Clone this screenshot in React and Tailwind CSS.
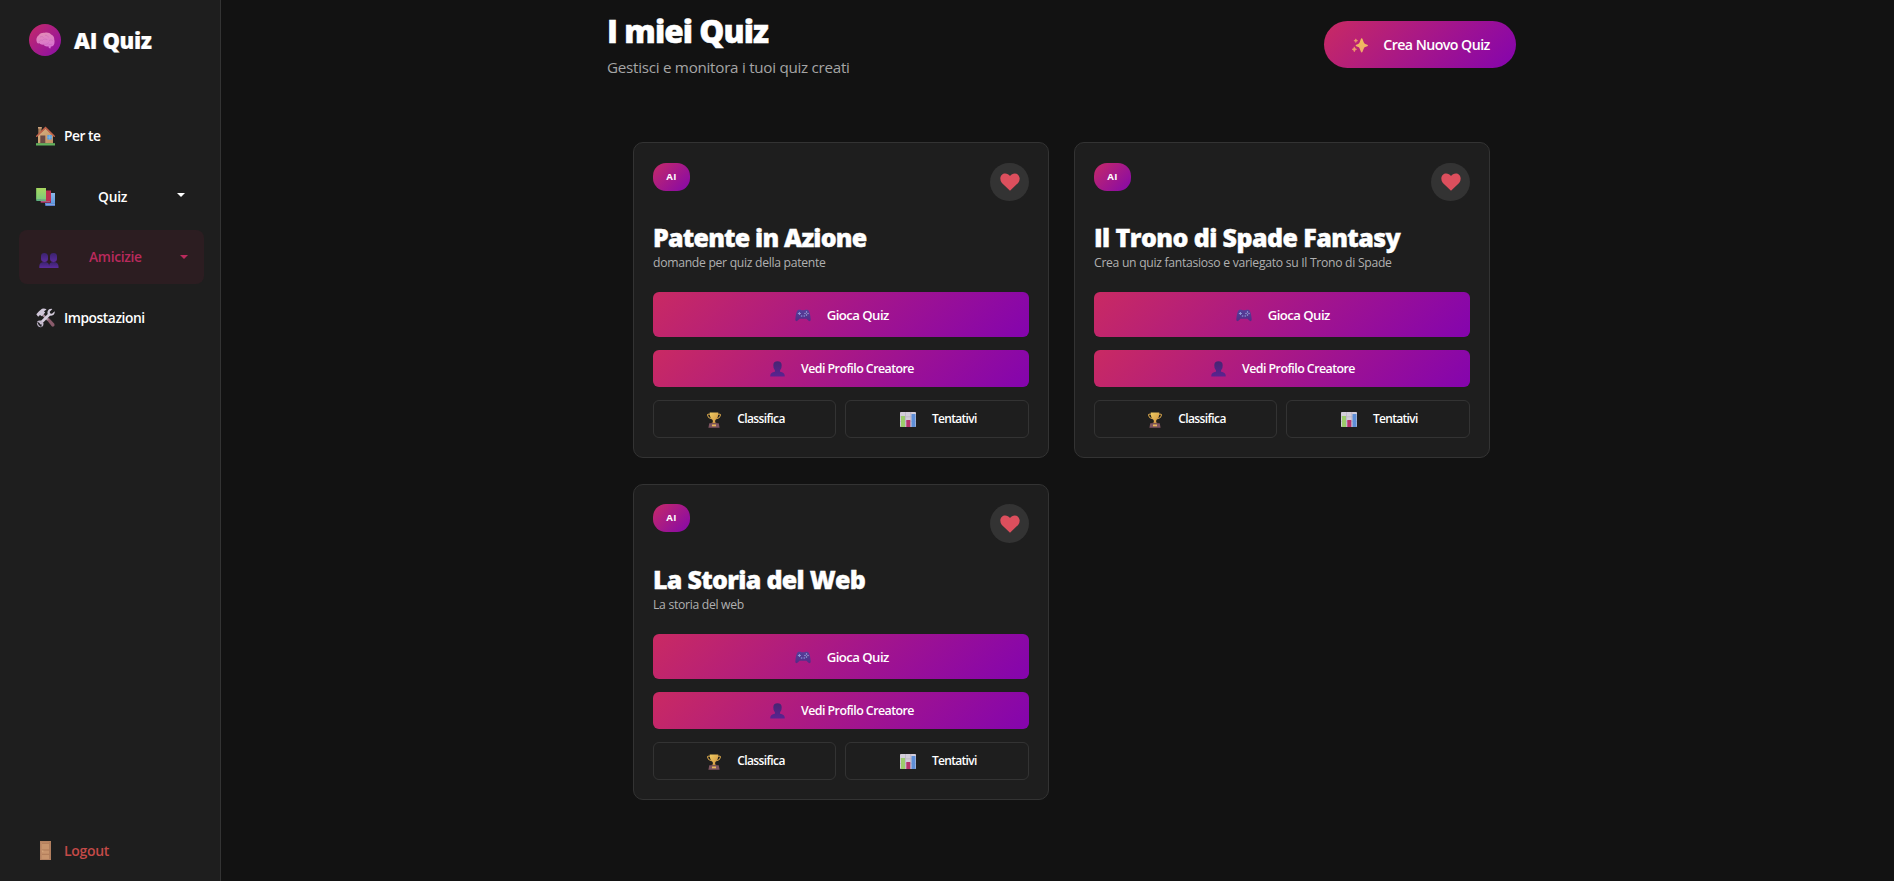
const BrainIcon = () => (
  <svg width="19" height="17" viewBox="0 0 19 17">
    <defs>
      <linearGradient id="brain" x1="0" y1="0" x2="0.3" y2="1">
        <stop offset="0" stopColor="#e48fb4" />
        <stop offset="1" stopColor="#d873d0" />
      </linearGradient>
    </defs>
    <path d="M1 10.500C-.3 7.800.6 4.600 2.800 3.200 4.200 1 6.800.4 8.800.8c2.400-.8 5.200.1 6.300 1.700 2.100.7 3.300 2.700 3.100 4.800.6 2.100.4 4.300-.6 6-.9 1-1.800 1.300-2.700 1.200l-.5 2-1.500-.4-.5-1.900c-2 .6-4.300 0-5-1.600-1.700.2-3.400-.3-3.900-1.300-1.200.3-2.100-.1-2.500-.8Z" fill="url(#brain)" />
    <path d="M3 9.800c.6-1.600 2-2 3.500-1.500 1-1.400 3-1.700 4.500-.8M4.200 5c1-.7 2.400-.6 3.100.2M9.500 3.300c1.400-.2 2.400.6 2.700 1.700M13.500 8.300c1.300-.6 2.600-.3 3.400.6M8 12.300c1.700.5 3.400-.2 4.500-1.400M13 12.600l3-.3" stroke="#c465b4" strokeWidth=".5" fill="none" strokeLinecap="round" />
  </svg>
);

const HouseIcon = () => (
  <svg width="19" height="20" viewBox="0 0 19 20">
    <defs>
      <linearGradient id="house" x1="0" y1="0" x2="1" y2="1">
        <stop offset="0" stopColor="#d9b382" />
        <stop offset="1" stopColor="#c08e63" />
      </linearGradient>
    </defs>
    <rect x="2.300" y="1.500" width="3.200" height="7" fill="#a77a55" />
    <rect x="2" y="1" width="3.800" height="1.500" fill="#c9a27c" />
    <path d="M2 9.500 9.500 2.200 17 9.500V17.500H2Z" fill="url(#house)" />
    <path d="M.7 10.200 9.500 1.600 18.300 10.200" stroke="#c0614a" strokeWidth="1.500" fill="none" strokeLinecap="round" />
    <rect x="4.300" y="9.500" width="5" height="8" fill="#6b4a45" />
    <rect x="11.300" y="9" width="4.600" height="4.500" fill="#5b9fdc" />
    <path d="M11.300 11.200h4.600M13.600 9v4.500" stroke="#86bdf0" strokeWidth=".6" />
    <rect x="0" y="17.200" width="19" height="2.300" fill="#63b35e" />
  </svg>
);

const BooksIcon = () => (
  <svg width="19" height="18" viewBox="0 0 19 18">
    <defs>
      <linearGradient id="bookGreen" x1="0" y1="0" x2="0" y2="1">
        <stop offset="0" stopColor="#a8d65e" />
        <stop offset="1" stopColor="#7ecb7c" />
      </linearGradient>
      <linearGradient id="bookBlue" x1="0" y1="0" x2="0" y2="1">
        <stop offset="0" stopColor="#8bb8ea" />
        <stop offset="1" stopColor="#5f97dc" />
      </linearGradient>
    </defs>
    <path d="M9 5h10v11H9Z" fill="url(#bookBlue)" />
    <path d="M9 15.700h10V18H10q-1 0-1-1Z" fill="#5277c8" />
    <path d="M10 16.400h9v.7h-9Z" fill="#a9c3ea" />
    <path d="M5 2.500h10v11H5Z" fill="#bf3051" />
    <path d="M4.500 13h10.500v2H5.200q-.7-.2-.7-1Z" fill="#8d2e57" />
    <path d="M5 13.500h9v.5H5Z" fill="#c48aa4" />
    <path d="M0 0h10v11.500H0Z" fill="url(#bookGreen)" />
    <path d="M0 11.200h10V13H1q-1 0-1-1Z" fill="#4fa574" />
    <path d="M1 11.700h9v.5H1Z" fill="#a5d9ab" />
    <path d="M.4 0v11.500" stroke="#6fae55" strokeWidth=".8" />
  </svg>
);

const FriendsIcon = () => (
  <svg width="20" height="15" viewBox="0 0 20 15">
    <defs>
      <linearGradient id="friends" x1="0" y1="0" x2="0" y2="1">
        <stop offset="0" stopColor="#3b236f" />
        <stop offset="1" stopColor="#5b2b9b" />
      </linearGradient>
    </defs>
    <g fill="url(#friends)">
      <path d="M2 3.300Q2 0 5.300 0T9 3.300V6Q8.800 9 5.500 9T2 6Z" />
      <path d="M11 3.300Q11 0 14.500 0T18 3.300V6Q17.800 9 14.500 9T11 6Z" />
      <path d="M.3 15v-2Q.5 9 5.400 9T10 13v2Z" />
      <path d="M10 15v-2Q10.300 9 14.600 9T19.500 13v2Z" />
    </g>
  </svg>
);

const ToolsIcon = () => (
  <svg width="20" height="20" viewBox="0 0 20 20">
    <path d="m10.500 11.500 2-2 5.800 6.200q.8 1.600-.4 2.600-1.200.8-2.400-.2Z" fill="#8a5b6b" />
    <path d="M5.500 5.500 12 12" stroke="#a48a9a" strokeWidth="2.400" />
    <path d="M.3 6.300 3 3.300 6 .8q2.600-.7 4.600.8L8 3.300l1.200 1.300L5.700 8.300 4 7 2.200 8.800Z" fill="#cfc6d8" />
    <path d="M4 15.700 14.200 5.500" stroke="#d4ccdc" strokeWidth="2.700" />
    <path d="M18.700 3.200 16 5.700 14 5.500 13.700 3.700 16.400 1Q13 .3 11.700 2.900q-.8 2 .3 3.700 1.700 1.500 4 1 3-1 2.700-4.400Z" fill="#d4ccdc" />
    <path d="M1 13.800q1.400-1.700 3.600-1.300 2.600.7 3 3.200.1 2.500-2.300 3.500l.4-2.700-1.800-1.500Z" fill="#c3b8cc" />
    <path d="M1 13.800Q.3 16.600 2 18.200q1.500 1.300 3.300 1L2.800 17Z" fill="#b5aabf" />
  </svg>
);

const DoorIcon = () => (
  <svg width="11" height="19" viewBox="0 0 11 19">
    <rect width="11" height="19" fill="#b68362" />
    <rect x="1.500" y="1.500" width="8" height="16.500" fill="#c8946d" />
    <path d="M2 2.300h7M2 9h7M2 13.300h7" stroke="#a87353" strokeWidth=".8" />
    <path d="M9.800 1v17" stroke="#9c6b4f" strokeWidth=".6" />
    <circle cx="2.800" cy="10" r=".6" fill="#e5bf90" />
  </svg>
);

const SparklesIcon = () => (
  <svg width="16" height="15" viewBox="0 0 16 15">
    <defs>
      <linearGradient id="spark" x1="0" y1="0" x2="0" y2="1">
        <stop offset="0" stopColor="#f0c257" />
        <stop offset="1" stopColor="#efa66e" />
      </linearGradient>
    </defs>
    <path d="M9.700.3q.6 0 .8.800l1.200 3.200q.4 1.200 1.500 1.600l2.100.8q.6.300.6.800t-.6.8l-2.100.8q-1.100.4-1.500 1.600l-1.200 3.100q-.2.800-.8.800t-.8-.8l-1.200-3.100Q7.300 9.500 6.200 9.100L4.300 8.300q-.6-.3-.6-.8t.6-.8l1.900-.8Q7.300 5.500 7.700 4.300l1.200-3.200q.2-.8.800-.8Z" fill="url(#spark)" />
    <path d="m3.800.8.6 1.300 1.300.6-1.300.6-.6 1.300-.6-1.300-1.300-.6 1.300-.6ZM2.300 8.800l.8 1.700 1.600.8-1.600.8-.8 1.800-.8-1.800-1.500-.8 1.500-.8Z" fill="#ef9a6c" stroke="#ef9a6c" strokeWidth=".5" />
  </svg>
);

const HeartIcon = () => (
  <svg width="20" height="18" viewBox="0 0 20 18" fill="#dc4f5d">
    <path d="M10 17.800 1.900 10Q.3 8.300.3 5.600C.4 2.500 2.600.5 5.200.5 7.100.5 8.900 1.400 10 3c1.100-1.600 2.900-2.500 4.800-2.500 2.600 0 4.800 2 4.900 5.100q0 2.700-1.600 4.400Z" />
  </svg>
);

const GamepadIcon = () => (
  <svg width="16" height="13" viewBox="0 0 16 13">
    <defs>
      <linearGradient id="pad" x1="0" y1="0" x2="0" y2="1">
        <stop offset="0" stopColor="#54409a" />
        <stop offset="1" stopColor="#542a86" />
      </linearGradient>
    </defs>
    <path d="M3.500.8h2.200l.8.500h3l.8-.5h2.200q1.500.4 2.200 3.200.9 3.500 1 6.500 0 1.700-1.200 1.700-.9 0-1.800-1.100L11.500 9.800h-7L3.300 11.100Q2.400 12.200 1.500 12.200.3 12.200.3 10.500q.1-3 1-6.500Q2 1.200 3.500.8Z" fill="url(#pad)" />
    <path d="M4.400 3v3M2.900 4.500h3" stroke="#8f9ad8" strokeWidth="1" />
    <circle cx="11.500" cy="3" r=".7" fill="#9fb2ea" />
    <circle cx="13" cy="4.500" r=".7" fill="#b59ad0" />
    <circle cx="11.500" cy="6" r=".7" fill="#8fb6d8" />
    <circle cx="10" cy="4.500" r=".7" fill="#a7a2e0" />
    <circle cx="6.600" cy="7" r=".9" fill="#7674c0" />
    <circle cx="9.300" cy="7" r=".9" fill="#7674c0" />
  </svg>
);

const PersonIcon = () => (
  <svg width="15" height="16" viewBox="0 0 15 16">
    <defs>
      <linearGradient id="person" x1="0" y1="0" x2="0" y2="1">
        <stop offset="0" stopColor="#452672" />
        <stop offset="1" stopColor="#5a2391" />
      </linearGradient>
    </defs>
    <path d="M3.300 4.200Q3.300.3 7.500.3t4.200 3.900q.2 3.600-1.700 5.200l.1 1.300q4.300.8 4.600 3.600V15.500H.3V14.300q.3-2.800 4.600-3.600L5 9.400Q3.100 7.800 3.300 4.200Z" fill="url(#person)" />
  </svg>
);

const TrophyIcon = () => (
  <svg width="14" height="16" viewBox="0 0 14 16">
    <defs>
      <linearGradient id="cup" x1="0" y1="0" x2="1" y2="1">
        <stop offset="0" stopColor="#f0cc62" />
        <stop offset="1" stopColor="#cf9240" />
      </linearGradient>
    </defs>
    <path d="M3 2.200H1Q.4 2.200.5 3 .8 6.300 4.300 6.700M11 2.200h2q.6 0 .5.8-.3 3.300-3.800 3.700" stroke="#dca94c" strokeWidth="1" fill="none" />
    <path d="M2.700.4h8.600Q11.400 6.500 8.300 8L8 11H6L5.700 8Q2.600 6.500 2.700.4Z" fill="url(#cup)" />
    <path d="M5 10.500h4l.5 1h-5Z" fill="#c58b41" />
    <path d="M2.300 11.300h9.400l.9 4.400H1.400Z" fill="#7e5561" />
    <rect x="5" y="12.500" width="4" height="1.800" fill="#e6b75a" />
  </svg>
);

const ChartIcon = () => (
  <svg width="16" height="15" viewBox="0 0 16 15">
    <rect width="16" height="15" rx=".8" fill="#d3cdda" />
    <path d="M0 4.800h16M0 9.500h16M5.500 0v15M10.700 0v15" stroke="#b5adc2" strokeWidth=".6" />
    <rect x="1" y="4" width="4" height="11" fill="#9ccc6c" />
    <rect x="6.300" y="8" width="4" height="7" fill="#b6336c" />
    <rect x="11.500" y="2" width="4" height="13" fill="#5f8fd8" />
  </svg>
);

const Caret = () => (
  <svg width="8" height="4" viewBox="0 0 8 4" fill="currentColor">
    <path d="M0 0h8L4 4Z" />
  </svg>
);

function Sidebar() {
  return (
    <aside className="flex h-full w-[221px] shrink-0 flex-col border-r border-[#333333] bg-[#1e1e1e]">
      <div className="mt-6 flex h-8 items-center pl-[29px]">
        <div className="flex size-8 items-center justify-center rounded-full bg-linear-135/srgb from-[#c62a68] to-[#8a10a8]">
          <BrainIcon />
        </div>
        <span className="mb-px ml-[13px] text-[22px] leading-8 font-extrabold tracking-[-0.32px] [-webkit-text-stroke:0.2px]">AI Quiz</span>
      </div>

      <nav className="mt-[53px] flex flex-col gap-[6px] pr-4 pl-[19px] text-[13.8px] font-[650]">
        <a className="flex h-[54.500px] items-center pl-[17px]">
          <HouseIcon />
          <span className="mt-px ml-[9px] tracking-[-0.5px]">Per te</span>
        </a>
        <a className="flex h-[54.500px] items-center pl-[17px]">
          <BooksIcon />
          <span className="mt-[2px] ml-[43px] tracking-[-0.2px]">Quiz</span>
          <span className="mr-[19px] mb-[3px] ml-auto"><Caret /></span>
        </a>
        <a className="flex h-[54px] items-center rounded-lg bg-[#2c1d21] pl-5 text-[#b92a5c]">
          <span className="mt-[7px]"><FriendsIcon /></span>
          <span className="mt-px ml-[30px] tracking-[-0.33px]">Amicizie</span>
          <span className="mr-4 mb-px ml-auto"><Caret /></span>
        </a>
        <a className="mt-[0.500px] flex h-[54.500px] items-center pl-[17px]">
          <ToolsIcon />
          <span className="mt-[2px] ml-[8px] tracking-[-0.45px]">Impostazioni</span>
        </a>
      </nav>

      <a className="mt-auto mb-[5px] flex h-[51px] items-center pl-10 text-[14px] font-semibold text-[#c44a48]">
        <DoorIcon />
        <span className="mb-px ml-[13px] tracking-[-0.3px]">Logout</span>
      </a>
    </aside>
  );
}

function QuizCard({ title, titleClass, text, rowClass }) {
  return (
    <article className={`rounded-[10px] border border-[#333333] bg-[#1e1e1e] px-[19px] pb-[19px] ${rowClass}`}>
      <div className="flex items-start justify-between">
        <span className="flex h-7 w-[37px] items-center justify-center rounded-[13px] bg-linear-135/srgb from-[#c62a68] to-[#8408aa] pb-px text-[9.6px] leading-none font-bold tracking-[0.4px]">
          AI
        </span>
        <span className="flex w-[39px] items-center justify-center self-stretch rounded-full bg-[#333333]">
          <HeartIcon />
        </span>
      </div>
      <h2 className={`mt-[22px] text-[25px] leading-7 font-extrabold whitespace-nowrap [-webkit-text-stroke:0.4px] ${titleClass}`}>{title}</h2>
      <p className="mt-[3px] text-[12.2px] leading-[18px] tracking-[-0.3px] text-[#b0b0b0]">{text}</p>
      <div className="mt-[20px] flex h-[45px] items-center justify-center gap-[15.500px] rounded-md bg-linear-135/srgb from-[#c92a63] to-[#8404ae] pt-[2px] pl-[2px] text-[13.2px] font-[650] tracking-[-0.55px]">
        <span><GamepadIcon /></span>
        Gioca Quiz
      </div>
      <div className="mt-[13px] flex h-[37px] items-center justify-center gap-[16px] rounded-md bg-linear-135/srgb from-[#c92a63] to-[#8404ae] pt-[2px] pl-[2px] text-[12.4px] font-[650] tracking-[-0.55px]">
        <span className="mb-[2px]"><PersonIcon /></span>
        Vedi Profilo Creatore
      </div>
      <div className="mt-[13px] grid h-[38px] grid-cols-[183px_184px] gap-[9px] text-[12px] font-[650]">
        <div className="flex items-center justify-center gap-[16px] rounded-md border border-[#333333] pl-[3px] tracking-[-0.6px]">
          <span className="mt-[1px]"><TrophyIcon /></span>
          Classifica
        </div>
        <div className="flex items-center justify-center gap-[15.500px] rounded-md border border-[#333333] pl-[3px] tracking-[-0.7px]">
          <span className="mt-[1px]"><ChartIcon /></span>
          Tentativi
        </div>
      </div>
    </article>
  );
}

export default function App() {
  return (
    <div className="flex h-screen overflow-hidden bg-[#121212] font-['Open_Sans',sans-serif] text-white [&_svg]:block [&_svg]:shrink-0">
      <Sidebar />
      <main className="flex-1 pt-[11px] pl-[386px]">
        <header className="flex h-[68px] w-[909px] justify-between">
          <div>
            <h1 className="text-[31.500px] leading-10 font-extrabold tracking-[-0.92px] [-webkit-text-stroke:0.5px]">I miei Quiz</h1>
            <p className="mt-[4px] text-[15.2px] leading-6 tracking-[-0.27px] text-[#a5a5a5]">Gestisci e monitora i tuoi quiz creati</p>
          </div>
          <button className="mt-[10px] flex h-[47px] w-[192px] items-center justify-center gap-[15px] rounded-full bg-linear-135/srgb from-[#c92a63] to-[#8404ae] pt-px pl-[2px] text-[14.2px] font-[650] tracking-[-0.55px]">
            <span><SparklesIcon /></span>
            Crea Nuovo Quiz
          </button>
        </header>
        <section className="mt-[63px] ml-[26px] grid grid-cols-[416px_416px] gap-x-[25px] gap-y-[26px]">
          <QuizCard title="Patente in Azione" titleClass="tracking-[-0.8px]" rowClass="pt-[20px] [&>div:first-child]:h-[38px]" text="domande per quiz della patente" />
          <QuizCard title="Il Trono di Spade Fantasy" titleClass="tracking-[-0.58px]" rowClass="pt-[20px] [&>div:first-child]:h-[38px]" text="Crea un quiz fantasioso e variegato su Il Trono di Spade" />
          <QuizCard title="La Storia del Web" titleClass="tracking-[-0.7px]" rowClass="pt-[19px] [&>div:first-child]:h-[39px]" text="La storia del web" />
        </section>
      </main>
    </div>
  );
}
